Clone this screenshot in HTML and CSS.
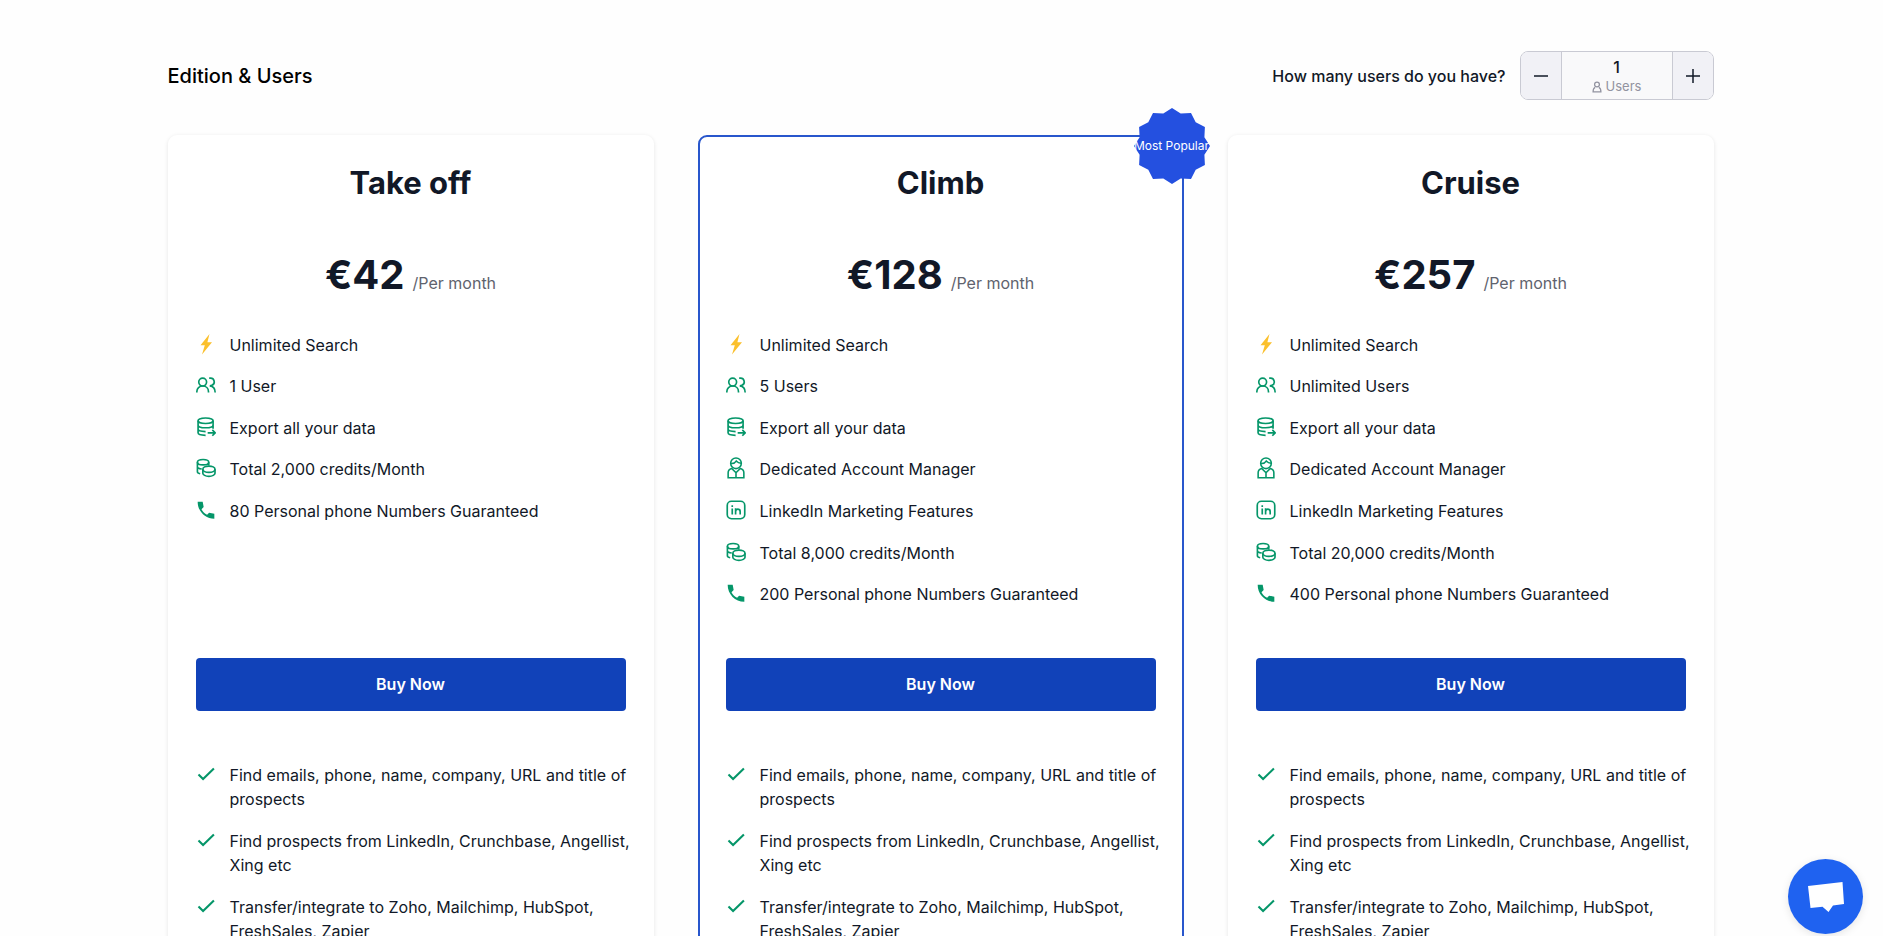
FILE: index.html
```html
<!DOCTYPE html>
<html lang="en">
<head>
<meta charset="utf-8">
<meta name="viewport" content="width=device-width, initial-scale=1">
<title>Pricing</title>
<link rel="stylesheet" href="styles.css">
</head>
<body>
<svg class="sprite" aria-hidden="true">
  <symbol id="bolt" viewBox="0 0 20 22"><path fill="#fbc02d" d="M13.500 1 4.500 12.300h4.300L6 21.500 16 9.300h-4.600z"/></symbol>
  <symbol id="users" viewBox="0 0 24 24"><g fill="none" stroke="currentColor" stroke-width="2"><circle cx="8" cy="8.500" r="4.700"/><path d="M1 21v-1C1 16 4 13.200 8 13.200s7 2.800 7 6.800v1M15.800 3.800H17a4.500 4.500 0 0 1 2.200 8.600c-.8.400-1.700.6-2.700.6 3.800.4 6.500 2.600 6.500 8"/></g></symbol>
  <symbol id="export" viewBox="0 0 24 24"><g fill="none" stroke="currentColor" stroke-width="2"><ellipse cx="11.500" cy="4.500" rx="9" ry="3.300"/><path d="M2.500 4.500V19c0 1.700 3.500 3 9 3M20.500 4.500V14M2.500 9.500c0 2 4 3.400 9 3.400s9-1.400 9-3.400M2.500 14.500c0 1.700 3.500 3 9 3M14 19h9M19.600 15.500 23 19l-3.400 3.500"/></g></symbol>
  <symbol id="credits" viewBox="0 0 24 24"><g fill="none" stroke="currentColor" stroke-width="2"><ellipse cx="8.500" cy="5" rx="6.800" ry="3.200"/><path d="M1.700 5v11.500c0 1 1.200 1.900 3.300 2.400M15.300 5v4M1.700 10.500c0 1.300 2 2.300 5.200 2.700"/><ellipse cx="15.500" cy="13.500" rx="7.300" ry="3.800"/><path d="M8.200 13.500v4.700c0 2 3.200 3.800 7.300 3.800s7.300-1.800 7.300-3.800v-4.700"/></g></symbol>
  <symbol id="phone" viewBox="0 0 24 24"><path fill="currentColor" d="M2 2h6l1.200 6.500L6.600 11c1.500 3 3.700 5.100 6.700 6.700l2.400-2.500 6.300 1.300v6C11 22.500 2 13.500 2 2z"/></symbol>
  <symbol id="manager" viewBox="0 0 24 28"><g fill="none" stroke="currentColor" stroke-width="2"><circle cx="12" cy="8" r="6.800"/><path d="M5.500 8.200c3 .3 5.500-.9 6.800-3 1.500 1.700 3.500 2.800 6.200 2.800M6.500 14.500c-3 .8-4.500 2.700-4.500 5.500v6.500h20V20c0-2.800-1.500-4.700-4.500-5.500L12 20zM12 20v6.500"/></g></symbol>
  <symbol id="network" viewBox="0 0 24 24"><g fill="none" stroke="currentColor" stroke-width="2"><rect x="1.500" y="1.500" width="21" height="21" rx="5"/><path d="M7.500 10.300v7M11.500 10v7.300M11.500 14c0-4 5.500-4 5.500 0v3.300M7.500 6.300v2"/></g></symbol>
  <symbol id="check" viewBox="0 0 24 24"><path fill="none" stroke="currentColor" stroke-width="2.500" d="M3 12.500 8.500 18 21.500 5.500"/></symbol>
  <symbol id="person" viewBox="0 0 12 14"><g fill="none" stroke="currentColor" stroke-width="1.500"><circle cx="6" cy="4" r="2.900"/><path d="M3.800 7.500C2 8.300 1.300 9.700 1.300 12.700h9.400c0-3-.7-4.400-2.500-5.200"/></g></symbol>
</svg>

<main class="page">
  <header class="header">
    <h1 class="title">Edition &amp; Users</h1>
    <div class="quantity">
      <span class="question">How many users do you have?</span>
      <div class="stepper">
        <button class="step" type="button" aria-label="Fewer users"><svg class="step-icon" viewBox="0 0 14 14"><path d="M0 7h14"/></svg></button>
        <div class="count">
          <span class="count-value">1</span>
          <span class="count-label"><svg class="person"><use href="#person"/></svg>Users</span>
        </div>
        <button class="step" type="button" aria-label="More users"><svg class="step-icon" viewBox="0 0 14 14"><path d="M0 7h14M7 0v14"/></svg></button>
      </div>
    </div>
  </header>

  <div class="plans">
    <section class="card">
      <h2 class="plan">Take off</h2>
      <p class="price"><strong class="amount">€42</strong><span class="period">/Per month</span></p>
      <ul class="features">
        <li class="item"><svg class="icon"><use href="#bolt"/></svg>Unlimited Search</li>
        <li class="item"><svg class="icon"><use href="#users"/></svg>1 User</li>
        <li class="item"><svg class="icon"><use href="#export"/></svg>Export all your data</li>
        <li class="item"><svg class="icon"><use href="#credits"/></svg>Total 2,000 credits/Month</li>
        <li class="item"><svg class="icon"><use href="#phone"/></svg>80 Personal phone Numbers Guaranteed</li>
      </ul>
      <button class="buy" type="button">Buy Now</button>
      <ul class="checks">
        <li class="item"><svg class="icon"><use href="#check"/></svg>Find emails, phone, name, company, URL and title of prospects</li>
        <li class="item"><svg class="icon"><use href="#check"/></svg>Find prospects from LinkedIn, Crunchbase, Angellist, Xing etc</li>
        <li class="item"><svg class="icon"><use href="#check"/></svg>Transfer/integrate to Zoho, Mailchimp, HubSpot, FreshSales, Zapier</li>
      </ul>
    </section>

    <section class="card card-popular">
      <div class="badge">
        <svg class="badge-shape" viewBox="-38 -38 76 76"><path fill="#2450e0" d="M0-38 8.700-32.400 19-32.900 23.700-23.700 32.900-19 32.400-8.700 38 0 32.400 8.700 32.900 19 23.700 23.700 19 32.900 8.700 32.400 0 38-8.700 32.400-19 32.900-23.700 23.700-32.900 19-32.400 8.700-38 0-32.400-8.700-32.900-19-23.700-23.700-19-32.900-8.700-32.400z"/></svg>
        <span class="badge-text">Most Popular</span>
      </div>
      <h2 class="plan">Climb</h2>
      <p class="price"><strong class="amount">€128</strong><span class="period">/Per month</span></p>
      <ul class="features">
        <li class="item"><svg class="icon"><use href="#bolt"/></svg>Unlimited Search</li>
        <li class="item"><svg class="icon"><use href="#users"/></svg>5 Users</li>
        <li class="item"><svg class="icon"><use href="#export"/></svg>Export all your data</li>
        <li class="item"><svg class="icon"><use href="#manager"/></svg>Dedicated Account Manager</li>
        <li class="item"><svg class="icon"><use href="#network"/></svg>LinkedIn Marketing Features</li>
        <li class="item"><svg class="icon"><use href="#credits"/></svg>Total 8,000 credits/Month</li>
        <li class="item"><svg class="icon"><use href="#phone"/></svg>200 Personal phone Numbers Guaranteed</li>
      </ul>
      <button class="buy" type="button">Buy Now</button>
      <ul class="checks">
        <li class="item"><svg class="icon"><use href="#check"/></svg>Find emails, phone, name, company, URL and title of prospects</li>
        <li class="item"><svg class="icon"><use href="#check"/></svg>Find prospects from LinkedIn, Crunchbase, Angellist, Xing etc</li>
        <li class="item"><svg class="icon"><use href="#check"/></svg>Transfer/integrate to Zoho, Mailchimp, HubSpot, FreshSales, Zapier</li>
      </ul>
    </section>

    <section class="card">
      <h2 class="plan">Cruise</h2>
      <p class="price"><strong class="amount">€257</strong><span class="period">/Per month</span></p>
      <ul class="features">
        <li class="item"><svg class="icon"><use href="#bolt"/></svg>Unlimited Search</li>
        <li class="item"><svg class="icon"><use href="#users"/></svg>Unlimited Users</li>
        <li class="item"><svg class="icon"><use href="#export"/></svg>Export all your data</li>
        <li class="item"><svg class="icon"><use href="#manager"/></svg>Dedicated Account Manager</li>
        <li class="item"><svg class="icon"><use href="#network"/></svg>LinkedIn Marketing Features</li>
        <li class="item"><svg class="icon"><use href="#credits"/></svg>Total 20,000 credits/Month</li>
        <li class="item"><svg class="icon"><use href="#phone"/></svg>400 Personal phone Numbers Guaranteed</li>
      </ul>
      <button class="buy" type="button">Buy Now</button>
      <ul class="checks">
        <li class="item"><svg class="icon"><use href="#check"/></svg>Find emails, phone, name, company, URL and title of prospects</li>
        <li class="item"><svg class="icon"><use href="#check"/></svg>Find prospects from LinkedIn, Crunchbase, Angellist, Xing etc</li>
        <li class="item"><svg class="icon"><use href="#check"/></svg>Transfer/integrate to Zoho, Mailchimp, HubSpot, FreshSales, Zapier</li>
      </ul>
    </section>
  </div>
</main>

<button class="chat" type="button" aria-label="Open chat"><svg class="chat-icon" viewBox="0 0 36 32"><path fill="#fff" d="M0 5 34.500 1 36 23 25 24.500 20.500 31 14.500 25.700 2.500 27z"/></svg></button>
</body>
</html>
```
FILE: styles.css
```css
* { box-sizing: border-box; }

body {
  margin: 0;
  background: #fefefe;
  color: #111827;
  font-family: Inter, "Liberation Sans", sans-serif;
  font-size: 16px;
  line-height: 24px;
}

h1, h2, p, ul { margin: 0; padding: 0; }
ul { list-style: none; }
button { font: inherit; color: inherit; border: 0; cursor: pointer; }
.sprite { display: none; }

.page {
  max-width: 1596px;
  margin: 0 auto;
  padding: 51px 26px 0 24px;
}

.header {
  display: flex;
  align-items: center;
  justify-content: space-between;
  margin-bottom: 35px;
}

.title { font-size: 20px; font-weight: 500; color: #000; }
.quantity { display: flex; align-items: center; gap: 14px; }
.question { font-weight: 500; }

.stepper {
  display: grid;
  grid-template-columns: 40px 112px 40px;
  border: 1px solid #c9cad3;
  border-radius: 8px;
  overflow: hidden;
}

.step {
  display: grid;
  place-items: center;
  padding: 0;
  background: #f1f1f6;
}

.step-icon { width: 14px; height: 14px; fill: none; stroke: #111827; stroke-width: 1.5; }

.count {
  display: flex;
  flex-direction: column;
  align-items: center;
  padding: 6px 0 3px;
  border: solid #c9cad3;
  border-width: 0 1px;
  background: #f9f9fa;
  font-size: 13px;
  line-height: 19px;
}

.count-value { font-size: 16px; font-weight: 500; }
.count-label { display: flex; align-items: center; gap: 4px; color: #9293a0; }
.person { width: 10px; height: 12px; }

.plans {
  display: grid;
  grid-template-columns: repeat(3, 1fr);
  gap: 44px;
}

.card {
  position: relative;
  padding: 26px 26px 28px;
  border: 2px solid transparent;
  border-radius: 9px;
  background: #fff;
  box-shadow: 0 1px 4px rgba(0, 0, 0, 0.1);
}

.card-popular { border-color: #2856cc; box-shadow: none; }

.plan {
  font-size: 31px;
  font-weight: 700;
  line-height: 40px;
  text-align: center;
}

.price {
  display: flex;
  align-items: baseline;
  justify-content: center;
  gap: 8px;
  margin: 46px 0 23px;
}

.amount { font-size: 40px; font-weight: 700; line-height: 52px; }
.period { color: #5f636e; }

.features {
  display: grid;
  grid-template-rows: repeat(7, 1fr);
  align-items: center;
  min-height: 291px;
}

.item { display: grid; grid-template-columns: 20px 1fr; gap: 14px; }
.icon { width: 20px; height: 22px; color: #059669; }

.buy {
  width: 100%;
  margin: 43px 0 52px;
  padding: 14px;
  border-radius: 4px;
  background: #1142b9;
  color: #fff;
  font-weight: 600;
  line-height: 25px;
}

.checks { display: grid; gap: 18px; margin-right: -14px; }

.badge {
  position: absolute;
  top: -29px;
  right: -28px;
  display: grid;
  place-items: center;
  width: 76px;
  height: 76px;
}

.badge-shape { grid-area: 1 / 1; width: 76px; height: 76px; }
.badge-text {
  position: relative;
  grid-area: 1 / 1;
  color: #fff;
  font-size: 12px;
  white-space: nowrap;
}

.chat {
  position: fixed;
  right: 20px;
  bottom: 2px;
  display: grid;
  place-items: center;
  width: 75px;
  height: 75px;
  padding: 0;
  border-radius: 50%;
  background: #1f62f0;
  box-shadow: 0 2px 8px rgba(0, 0, 0, 0.1);
}

.chat-icon { width: 36px; height: 32px; }
```
